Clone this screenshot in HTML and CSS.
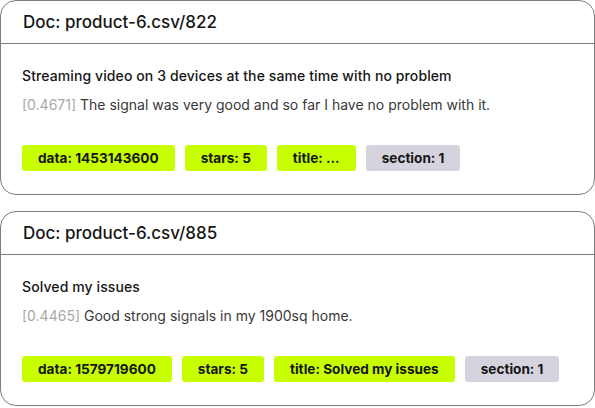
FILE: index.html
```html
<!DOCTYPE html>
<html>
<head>
<meta charset="utf-8">
<link rel="stylesheet" href="styles.css">
</head>
<body>
<div class="list">
  <div class="card">
    <div class="card-head">Doc: product-6.csv/822</div>
    <div class="card-body">
      <div class="subtitle">Streaming video on 3 devices at the same time with no problem</div>
      <div class="text"><span class="score">[0.4671]</span> The signal was very good and so far I have no problem with it.</div>
      <div class="tags">
        <span class="tag lime">data: 1453143600</span>
        <span class="tag lime">stars: 5</span>
        <span class="tag lime">title: ...</span>
        <span class="tag gray">section: 1</span>
      </div>
    </div>
  </div>
  <div class="card">
    <div class="card-head">Doc: product-6.csv/885</div>
    <div class="card-body">
      <div class="subtitle">Solved my issues</div>
      <div class="text"><span class="score">[0.4465]</span> Good strong signals in my 1900sq home.</div>
      <div class="tags">
        <span class="tag lime">data: 1579719600</span>
        <span class="tag lime">stars: 5</span>
        <span class="tag lime">title: Solved my issues</span>
        <span class="tag gray">section: 1</span>
      </div>
    </div>
  </div>
</div>
</body>
</html>
```
FILE: styles.css
```css
html, body {
  margin: 0;
  padding: 0;
  background: #ffffff;
}
body {
  font-family: Inter, "Noto Sans", sans-serif;
  color: #161616;
}
.list {
  display: flex;
  flex-direction: column;
  gap: 16px;
}
.card {
  border: 1px solid #7d7d7d;
  border-radius: 16px;
  background: #fff;
}
.card-head {
  height: 42px;
  line-height: 42px;
  padding: 0 22px;
  font-size: 17px;
  font-weight: 500;
  border-bottom: 1px solid #7d7d7d;
}
.card-body {
  padding: 22px 21px 23px;
}
.subtitle {
  font-size: 14px;
  font-weight: 500;
  letter-spacing: 0.1px;
  line-height: 20px;
}
.text {
  margin-top: 9px;
  font-size: 14px;
  line-height: 20px;
  color: #393939;
}
.score {
  color: #a8a8a8;
}
.tags {
  margin-top: 30px;
  display: flex;
  gap: 10px;
}
.tag {
  height: 26px;
  line-height: 26px;
  padding: 0 16px;
  border-radius: 3px;
  font-size: 13.6px;
  font-weight: 700;
  color: #161616;
}
.lime {
  background: #c8ff00;
}
.gray {
  background: #d5d3dd;
}
```
